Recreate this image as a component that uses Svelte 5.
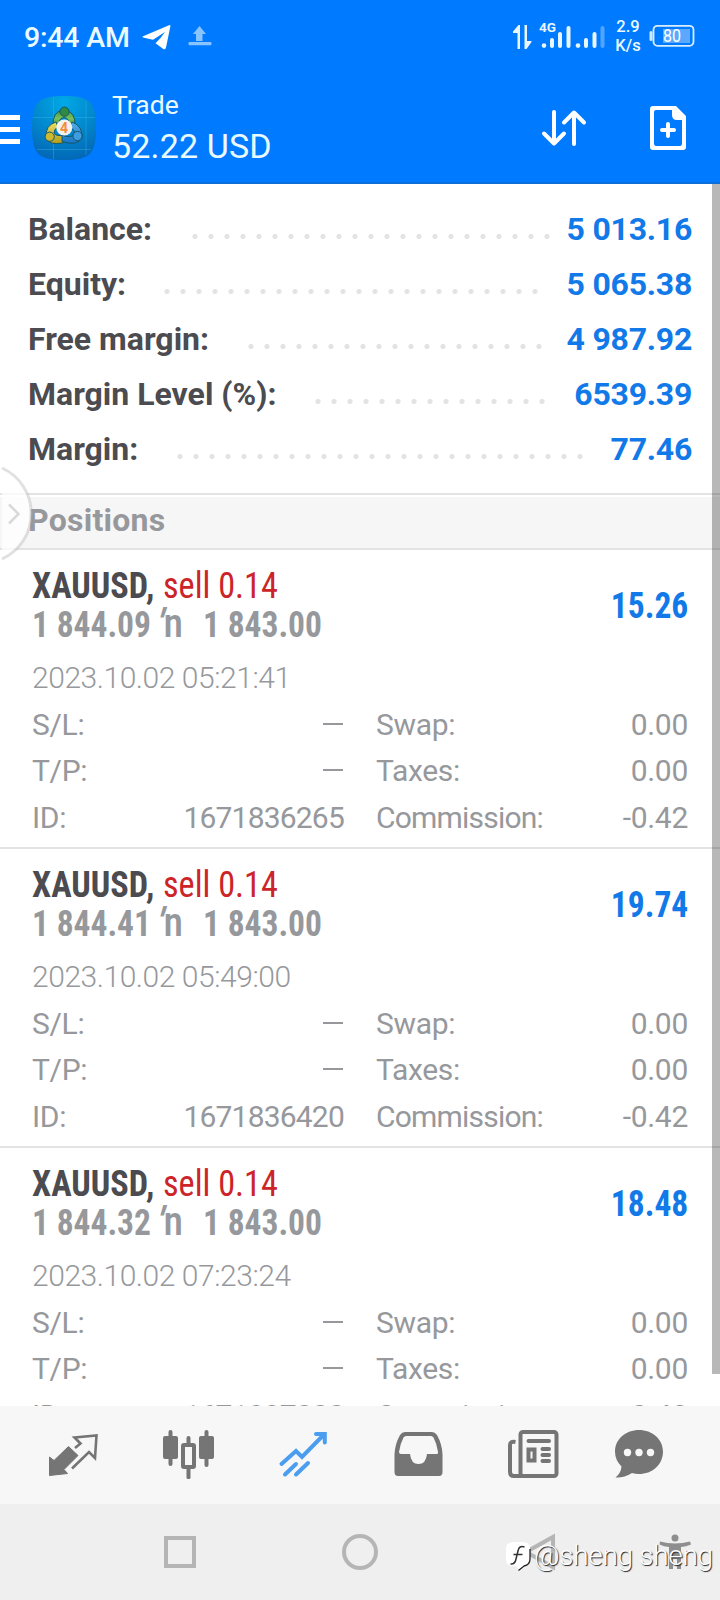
<script>
  const summary = [
    { label: 'Balance:', value: '5 013.16', dots: 23, w: 122.5 },
    { label: 'Equity:', value: '5 065.38', dots: 24, w: 94.5 },
    { label: 'Free margin:', value: '4 987.92', dots: 19, w: 178.5 },
    { label: 'Margin Level (%):', value: '6539.39', dots: 15, w: 245.5 },
    { label: 'Margin:', value: '77.46', dots: 26, w: 107.5 }
  ];
  const positions = [
    { open: '1 844.09', time: '2023.10.02 05:21:41', id: '1671836265', profit: '15.26' },
    { open: '1 844.41', time: '2023.10.02 05:49:00', id: '1671836420', profit: '19.74' },
    { open: '1 844.32', time: '2023.10.02 07:23:24', id: '1671837000', profit: '18.48' }
  ];
</script>

<div class="screen">
  <header>
    <div class="status">
      <span class="time">9:44 AM</span>
      <svg class="tg" width="29" height="25" viewBox="0 0 29 25"><path d="M.5 11.5 27 .2Q28.7-.3 28.3 1.8L24 22.5Q23.300 25.300 21 23.700L13.500 18.200 18.500 13 23 7 11 14.700 2 12.800Q-.2 12.200 .5 11.500z" fill="#fff"/></svg>
      <svg class="up" width="24" height="20" viewBox="0 0 24 20"><path d="M11.500 0 18 8H14.500V15H8V8H5z" fill="#8ac4ff"/><rect x="0.500" y="16" width="23" height="3.200" rx="1" fill="#8ac4ff"/></svg>
      <span class="spacer"></span>
      <svg class="signals" width="92" height="32" viewBox="0 0 92 32">
        <g fill="#e8f6ff">
          <path d="M5.500 5H7V29H4.500V13H0V11.500zM11.500 5H14V21H18.500V22L13.500 29H11.500z"/>
          <text x="26" y="11.500" font-size="13.500" font-weight="700" fill="#e8f6ff" textLength="17" lengthAdjust="spacingAndGlyphs">4G</text>
          <circle cx="31" cy="25.600" r="2.300"/><rect x="37" y="18" width="4" height="10" rx="2"/><rect x="45" y="12" width="4" height="16" rx="2"/><rect x="53.500" y="6" width="4" height="22" rx="2"/>
          <circle cx="65" cy="25.600" r="2.300"/><rect x="71" y="18" width="4" height="10" rx="2"/><rect x="79.500" y="12" width="4" height="16" rx="2"/><rect x="87.500" y="6" width="4" height="22" rx="2" opacity=".35"/>
        </g>
      </svg>
      <div class="rate"><span>2.9</span><span>K/s</span></div>
      <svg class="batt" width="46" height="24" viewBox="0 0 46 24"><rect x="0.500" y="7" width="3" height="10" rx="1.500" fill="#cfe8ff"/><rect x="4.500" y="1.800" width="40" height="20" rx="4" fill="none" stroke="#d8eeff" stroke-width="1.800"/><rect x="14" y="5" width="27" height="14" fill="#5aa9ff"/><text x="14" y="18" font-size="17.500" fill="#fff" textLength="18" lengthAdjust="spacingAndGlyphs">80</text></svg>
    </div>
    <div class="appbar">
      <div class="burger"><i></i><i></i><i></i></div>
      <svg class="logo" width="64" height="64" viewBox="0 0 64 64">
        <defs>
          <radialGradient id="bg" cx=".5" cy=".1" r="1"><stop offset="0" stop-color="#00a9e6"/><stop offset=".5" stop-color="#0287cc"/><stop offset="1" stop-color="#0361b2"/></radialGradient>
          <linearGradient id="gr" x1="0" y1="0" x2="0" y2="1"><stop offset="0" stop-color="#3f9a48"/><stop offset=".5" stop-color="#7cc05a"/><stop offset="1" stop-color="#23803a"/></linearGradient>
          <linearGradient id="ye" x1="0" y1="0" x2="0" y2="1"><stop offset="0" stop-color="#e9e063"/><stop offset="1" stop-color="#b39c1b"/></linearGradient>
          <linearGradient id="bl" x1="0" y1="0" x2="0" y2="1"><stop offset="0" stop-color="#55b0e8"/><stop offset="1" stop-color="#1673c4"/></linearGradient>
        </defs>
        <path d="M0 32C0 6 6 0 32 0S64 6 64 32 58 64 32 64 0 58 0 32z" fill="url(#bg)"/>
        <path d="M21.500 1V63M54 5V59M1 21.500H63M5 53.500H59" stroke="#4bb8ea" stroke-opacity=".35" fill="none"/>
        <g stroke-width="1" stroke="#17566a">
          <path d="M21 31Q20 14.500 32 14.500Q44 14.500 43 31L37 31Q38 22 32 21.500Q26 22 27 31z" fill="url(#gr)"/>
          <path d="M24 26Q13 29 14 42Q17 49.500 31 47L33 39Q24 41 22 37Q22 33 26 31z" fill="url(#ye)"/>
          <path d="M40 26Q51 30 50 42Q45 50.500 30 45.500L30 39Q38 43 43 38Q43 34 38 31z" fill="url(#bl)"/>
          <circle cx="32.500" cy="15.700" r="4.600" fill="#2f8a42"/><circle cx="17.700" cy="40.700" r="4.600" fill="#cdb92e"/><circle cx="45.500" cy="40" r="4.600" fill="#3d9de0"/>
        </g>
        <circle cx="32.300" cy="31.500" r="8" fill="#f3f1ec"/>
        <text x="32" y="36.500" text-anchor="middle" font-size="14" font-weight="700" fill="#f58a3c">4</text>
      </svg>
      <div class="titles"><span class="t1">Trade</span><span class="t2">52.22 USD</span></div>
      <span class="spacer"></span>
      <svg class="sort" width="46" height="38" viewBox="0 0 46 38"><path d="M13 3V34M3 24.500 13 34.500 23 24.500M33 35V4M23 13.500 33 3.500 43 13.500" fill="none" stroke="#fff" stroke-width="4" stroke-linecap="round" stroke-linejoin="round"/></svg>
      <svg class="new" width="36" height="44" viewBox="0 0 36 44"><path d="M3 0H26L36 10V41Q36 44 33 44H3Q0 44 0 41V3Q0 0 3 0zM6 4Q4 4 4 6V37Q4 40 6 40H30Q32 40 32 37V14H27Q22 14 22 9V4z" fill="#fff" fill-rule="evenodd"/><path d="M18 18V30M12 24H24" stroke="#fff" stroke-width="4" stroke-linecap="round"/></svg>
    </div>
  </header>

  <main>
    <section class="summary">
      {#each summary as s}
        <div class="srow">
          <span class="slabel" style="width:{s.w}px">{s.label}</span>
          <span class="dots" style="width:{s.dots * 16}px"></span>
          <span class="sval">{s.value}</span>
        </div>
      {/each}
    </section>
    <div class="band">Positions</div>
    {#each positions as p}
      <article>
        <div class="head">
          <div class="names">
            <div class="line"><b class="sym">XAUUSD,</b><span class="side">sell 0.14</span></div>
            <div class="line prices"><b class="op">{p.open}</b><b class="arr"><i>′</i>n</b><b class="cur">1 843.00</b></div>
          </div>
          <b class="profit">{p.profit}</b>
        </div>
        <div class="date">{p.time}</div>
        <div class="grid">
          <span>S/L:</span><span class="r dash"><i></i></span><span class="c">Swap:</span><span class="r">0.00</span>
          <span>T/P:</span><span class="r dash"><i></i></span><span class="c">Taxes:</span><span class="r">0.00</span>
          <span>ID:</span><span class="r id">{p.id}</span><span class="c com">Commission:</span><span class="r">-0.42</span>
        </div>
      </article>
    {/each}
    <div class="scrollbar"></div>
    <svg class="handle" width="34" height="98" viewBox="0 0 34 98"><path d="M2 3A50 50 0 0 1 2 94z" fill="#fff" fill-opacity=".75"/><path d="M2 3A50 50 0 0 1 2 94" fill="none" stroke="#aaa" stroke-opacity=".35" stroke-width="3"/><path d="M9 39.500 18.500 49 9 58.500" fill="none" stroke="#d9d9d9" stroke-width="2.500"/></svg>
  </main>

  <nav>
    <svg width="120" height="98" viewBox="0 0 120 98"><path d="M49.500 51V69.500L67.500 67.500 64 63.500 78 49.500 68.500 40.500 54 54.500z" fill="#757575" stroke="#757575" stroke-linejoin="round"/><path d="M75 42 80.500 37.500 74.500 31.500 96.500 29.500 95 52 89 46 72 62.500" fill="none" stroke="#757575" stroke-width="2.600"/></svg>
    <svg width="120" height="98" viewBox="120 0 120 98"><g fill="#757575"><rect x="163" y="30" width="15" height="23" rx="2"/><rect x="168.500" y="24" width="4" height="36" rx="2"/><rect x="199" y="30" width="15" height="23" rx="2"/><rect x="204.500" y="24" width="4" height="37" rx="2"/><rect x="186.500" y="30" width="4" height="9" rx="2"/><rect x="186.500" y="61" width="4" height="12" rx="1.500"/></g><rect x="183" y="39" width="11" height="22" rx="1" fill="none" stroke="#757575" stroke-width="4"/></svg>
    <svg width="120" height="98" viewBox="240 0 120 98"><path d="M281.500 58 296 45 302 51 324 28.500M316 28H324.800V36.500M285 68.500 296 58M296 68.500 308 57" fill="none" stroke="#4b9df0" stroke-width="4" stroke-linecap="round" stroke-linejoin="miter"/></svg>
    <svg width="120" height="98" viewBox="360 0 120 98"><path d="M405 26H432Q435 26 437 29Q442 38 442.500 48V66Q442.500 70 439 70H398Q394.500 70 394.500 66V48Q395 38 400 29Q402 26 405 26zM406 30Q404.500 30 403.500 31.500Q400 38 399 46Q399 48 401 48H410Q411 58 418.500 58Q426 58 427 48H436Q438.500 48 438 46Q437 38 433.500 31.500Q432.500 30 431 30z" fill="#757575" fill-rule="evenodd"/></svg>
    <svg width="120" height="98" viewBox="480 0 120 98"><g fill="none" stroke="#757575" stroke-width="4"><rect x="520.500" y="26" width="36" height="44" rx="2.500"/><path d="M515.500 36Q510 35 510 39V66Q510 70 514 70H522"/><path d="M528.500 35H549M542.500 43H549M542.500 49H549M542.500 55H549" stroke-linecap="round"/><rect x="528.500" y="43.500" width="6" height="11"/></g></svg>
    <svg width="120" height="98" viewBox="600 0 120 98"><path d="M639 24C652 24 663 33 663 45.500C663 59 652 68 639 68Q635 68 632 67Q624 72 615.500 71.500Q621 67 621.500 60.500Q615 54 615 45.500C615 33 626 24 639 24z" fill="#757575"/><g fill="#f7f7f7"><circle cx="627.500" cy="46.500" r="3.700"/><circle cx="639" cy="46.500" r="3.700"/><circle cx="650.500" cy="46.500" r="3.700"/></g></svg>
  </nav>

  <footer>
    <svg width="720" height="96" viewBox="0 0 720 96">
      <g fill="none" stroke="#b5b5b5" stroke-width="4"><rect x="166" y="34" width="28" height="28"/><circle cx="360" cy="48" r="16"/><path d="M553 33V63L526 48z"/></g>
      <g fill="#8e8e8e"><circle cx="675" cy="34" r="3.500"/><path d="M660 37.500Q675 41.500 690 37.500L691 40.500Q686 42.500 681 43V65H677V55H673V65H669V43Q664 42.500 659.500 40.500z"/></g>
    </svg>
    <div class="mark">
      <svg width="26" height="30" viewBox="0 0 26 30"><path d="M9 1H18Q25 1 25 8V18Q25 24 19 25L14 29 11 25H8Q1 25 1 18V8Q1 1 9 1z" fill="#fff"/><path d="M25 8V18Q25 24 19 25L13.500 29.500" fill="none" stroke="#222" stroke-width="1.300"/><path d="M19.500 6Q14 4 13 10L11 18Q10 23.500 5.500 23M8.500 13.500H17.500" fill="none" stroke="#333" stroke-width="1.500"/></svg>
      <span>@sheng sheng</span>
    </div>
  </footer>
</div>

<style>
  :global(body) { margin: 0; }
  .screen { width: 720px; height: 1600px; display: flex; flex-direction: column; overflow: hidden; background: #fff; font-family: Roboto, sans-serif; color: #96989c; }
  .spacer { flex: 1; }
  svg { display: block; flex: none; }
  header { height: 184px; background: #007aff; box-sizing: border-box; border-bottom: 2px solid #0e6fdc; color: #eafaff; flex: none; }
  .status { height: 74px; display: flex; align-items: center; padding: 0 24px 0 24px; box-sizing: border-box; }
  .time { font-size: 28.500px; font-weight: 550; white-space: nowrap; width: 105px; letter-spacing: -.2px; }
  .tg { margin-left: 13px; }
  .up { margin-left: 17px; margin-top: -3px; }
  .signals { margin-bottom: 2px; margin-right: -1px; }
  .rate { display: flex; flex-direction: column; align-items: center; font-size: 16.500px; font-weight: 500; line-height: 19px; width: 26px; margin: -2px 8px 0 11px; }
  .batt { margin-top: -2px; margin-right: 1px; }
  .appbar { height: 108px; display: flex; align-items: center; }
  .burger { display: flex; flex-direction: column; gap: 7px; width: 20px; padding-top: 3px; }
  .burger i { height: 5px; background: #fff; }
  .logo { margin-left: 12px; }
  .titles { display: flex; flex-direction: column; margin-left: 16px; }
  .t1 { font-size: 26.500px; line-height: 36px; }
  .t2 { font-size: 34px; line-height: 46px; letter-spacing: .15px; }
  .sort { margin-right: 63px; }
  .new { margin-right: 34px; }
  main { position: relative; height: 1222px; flex: none; overflow: hidden; }
  .summary { height: 309px; padding-top: 17px; box-sizing: border-box; }
  .srow { height: 55px; display: flex; align-items: center; padding: 0 28px; font-size: 32px; font-weight: 680; color: #4b4b50; }
  .slabel { white-space: nowrap; letter-spacing: 0; }
  .dots { height: 5px; margin: 16px 0 0 36px; background: radial-gradient(circle at 8px 2.500px, #e3e3e3 2.200px, transparent 2.900px) 0 0 / 16px 5px; }
  .sval { margin: 0 0 0 auto; color: #1279e8; letter-spacing: -.25px; }
  .band { height: 57px; box-sizing: border-box; border-top: 2px solid #e2e3e4; border-bottom: 2px solid #e2e3e4; background: linear-gradient(#fff 2px, #f6f6f6 2px); padding-left: 28px; font-size: 32px; line-height: 50px; font-weight: 680; letter-spacing: .25px; }
  article { height: 299px; box-sizing: border-box; border-bottom: 2px solid #e2e3e4; padding: 15px 32px 0; }
  .head { display: flex; justify-content: space-between; height: 78px; }
  .line { display: flex; height: 39px; line-height: 42px; font-size: 36px; font-stretch: 75%; white-space: pre; }
  .sym, .side, .op, .cur { display: block; transform-origin: 0 50%; }
  .sym { color: #4b4b50; width: 131px; transform: scaleX(.95); }
  .side { color: #cc2428; transform: scaleX(.95); }
  .op { width: 125px; transform: scaleX(.93); }
  .cur { transform: scaleX(.93); }
  .arr { font-size: 40px; line-height: 39px; font-weight: 500; width: 46px; display: flex; }
  .arr i { font-style: normal; font-weight: 600; transform: skewX(-16deg); }
  .profit { color: #1279e8; font-size: 36px; font-stretch: 75%; line-height: 82px; transform: scaleX(.93); transform-origin: 100% 50%; }
  .date { font-size: 30px; line-height: 36px; margin-top: 17px; font-weight: 360; letter-spacing: -.45px; }
  .grid { display: grid; grid-template-columns: 90px 222px 221px 123px; grid-auto-rows: 46.400px; font-size: 30px; line-height: 46px; margin-top: 6px; font-weight: 400; letter-spacing: -.3px; }
  .r { text-align: right; }
  .id { letter-spacing: -.8px; }
  .com { letter-spacing: -.8px; }
  .c { padding-left: 32px; }
  .dash i { display: inline-block; width: 20px; height: 2px; background: #96989c; vertical-align: 10px; margin-right: 1px; }
  .scrollbar { position: absolute; right: 0; top: 0; width: 8px; height: 1190px; background: rgba(0,0,0,.28); }
  .handle { position: absolute; left: 0; top: 281px; }
  nav { height: 98px; background: #f7f7f7; display: flex; flex: none; }
  footer { height: 96px; background: #efefef; position: relative; flex: none; }
  .mark { position: absolute; left: 505px; top: 37px; display: flex; gap: 3px; color: #fff; font-size: 28px; font-weight: 350; line-height: 29px; letter-spacing: -.3px; white-space: nowrap; text-shadow: 1px 1px 1px #222; }
</style>
